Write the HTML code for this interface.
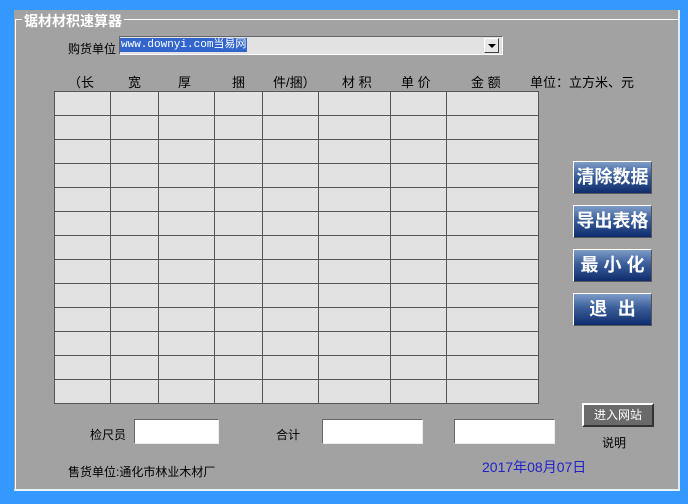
<!DOCTYPE html>
<html><head><meta charset="utf-8"><style>
*{margin:0;padding:0;box-sizing:border-box}
body{width:688px;height:504px;background:#3399ff;position:relative;overflow:hidden;font-family:"Liberation Sans","Noto Sans CJK SC",sans-serif;font-size:12px;color:#000}
.panel{position:absolute;left:14px;top:10px;width:666px;height:481px;background:#a2a2a2;border-right:2px solid #d8ecff;border-bottom:2px solid #e8f4ff}
.gl{position:absolute;background:#fff}
.t{position:absolute;white-space:nowrap}
.btn{position:absolute;left:573px;width:79px;height:33px;border:1px solid #fff;border-right-color:#555;border-bottom-color:#555;background:linear-gradient(#7e9cc8,#3a5e9a 45%,#0e2c6c);color:#fff;font-weight:bold;font-size:18px;line-height:31px;white-space:nowrap;display:flex;justify-content:center;overflow:hidden}
.btn.sp{justify-content:space-around;padding:0 4px}
.btn.sp2{justify-content:space-around;padding:0 10px}
.inp{position:absolute;height:25px;background:#fff;border:1px solid #666;border-right-color:#eee;border-bottom-color:#eee}
</style></head><body>
<div class="panel"></div>
<div class="gl" style="left:15px;top:19px;width:1px;height:471px"></div>
<div class="gl" style="left:15px;top:19px;width:663px;height:1px"></div>
<div class="t" style="left:22px;top:11px;background:#a2a2a2;color:#fff;font-weight:bold;font-size:14px;padding:0 2px">锯材材积速算器</div>
<div class="t" style="left:68px;top:40px;font-size:12px">购货单位</div>
<div style="position:absolute;left:119px;top:36px;width:384px;height:19px;background:#e2e2e2;border:1px solid #666;border-right-color:#fff;border-bottom-color:#fff"></div>
<div class="t" style="left:120px;top:38px;height:14px;background:#3366cc;color:#fff;font-family:'Liberation Mono','Noto Sans CJK SC',monospace;font-size:11px;line-height:14px;padding:0 1px">www.downyi.com当易网</div>
<div style="position:absolute;left:484px;top:38px;width:15px;height:15px;background:#e8e8e8;border:1px solid #fff;border-right-color:#444;border-bottom-color:#444"><div style="margin:5px auto 0;width:0;height:0;border-left:4px solid transparent;border-right:4px solid transparent;border-top:4px solid #000"></div></div>
<div class="t" style="left:68px;top:72px;font-size:13px">（长</div>
<div class="t" style="left:128px;top:72px;font-size:13px">宽</div>
<div class="t" style="left:178px;top:72px;font-size:13px">厚</div>
<div class="t" style="left:232px;top:72px;font-size:13px">捆</div>
<div class="t" style="left:273px;top:72px;font-size:13px">件/捆）</div>
<div class="t" style="left:342px;top:72px;font-size:13px">材 积</div>
<div class="t" style="left:401px;top:72px;font-size:13px">单 价</div>
<div class="t" style="left:471px;top:72px;font-size:13px">金 额</div>
<div class="t" style="left:530px;top:72px;font-size:13px">单位：立方米、元</div>
<svg style="position:absolute;left:0;top:0" width="688" height="504">
<rect x="54" y="91" width="484" height="312" fill="#e2e2e2"/>
<g stroke="#555" stroke-width="1">
<line x1="54.5" y1="91" x2="54.5" y2="404"/><line x1="110.5" y1="91" x2="110.5" y2="404"/><line x1="158.5" y1="91" x2="158.5" y2="404"/><line x1="214.5" y1="91" x2="214.5" y2="404"/><line x1="262.5" y1="91" x2="262.5" y2="404"/><line x1="318.5" y1="91" x2="318.5" y2="404"/><line x1="390.5" y1="91" x2="390.5" y2="404"/><line x1="446.5" y1="91" x2="446.5" y2="404"/><line x1="538.5" y1="91" x2="538.5" y2="404"/>
<line x1="54" y1="91.5" x2="539" y2="91.5"/><line x1="54" y1="115.5" x2="539" y2="115.5"/><line x1="54" y1="139.5" x2="539" y2="139.5"/><line x1="54" y1="163.5" x2="539" y2="163.5"/><line x1="54" y1="187.5" x2="539" y2="187.5"/><line x1="54" y1="211.5" x2="539" y2="211.5"/><line x1="54" y1="235.5" x2="539" y2="235.5"/><line x1="54" y1="259.5" x2="539" y2="259.5"/><line x1="54" y1="283.5" x2="539" y2="283.5"/><line x1="54" y1="307.5" x2="539" y2="307.5"/><line x1="54" y1="331.5" x2="539" y2="331.5"/><line x1="54" y1="355.5" x2="539" y2="355.5"/><line x1="54" y1="379.5" x2="539" y2="379.5"/><line x1="54" y1="403.5" x2="539" y2="403.5"/>
</g></svg>
<div class="btn" style="top:161px">清除数据</div>
<div class="btn" style="top:205px">导出表格</div>
<div class="btn sp" style="top:249px"><span>最</span><span>小</span><span>化</span></div>
<div class="btn sp2" style="top:293px"><span>退</span><span>出</span></div>
<div style="position:absolute;left:582px;top:403px;width:72px;height:24px;background:#6a6a6a;border:2px solid #fff;border-right-color:#333;border-bottom-color:#333;color:#fff;text-align:center;line-height:20px;font-size:12px">进入网站</div>
<div class="t" style="left:602px;top:434px">说明</div>
<div class="t" style="left:90px;top:426px">检尺员</div>
<div class="inp" style="left:134px;top:419px;width:85px"></div>
<div class="t" style="left:276px;top:426px">合计</div>
<div class="inp" style="left:322px;top:419px;width:101px"></div>
<div class="inp" style="left:454px;top:419px;width:101px"></div>
<div class="t" style="left:68px;top:463px">售货单位:通化市林业木材厂</div>
<div class="t" style="left:482px;top:457px;color:#2222cc;font-size:14px">2017年08月07日</div>
</body></html>
